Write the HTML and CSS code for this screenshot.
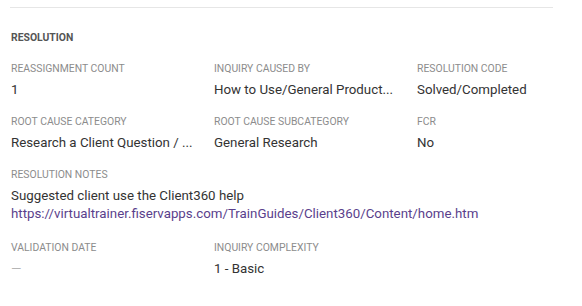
FILE: index.html
```html
<!DOCTYPE html>
<html>
<head>
<meta charset="utf-8">
<link rel="stylesheet" href="styles.css">
</head>
<body>
<section class="panel">
  <h2 class="section-title">RESOLUTION</h2>
  <div class="fields">
    <div class="field">
      <div class="label">REASSIGNMENT COUNT</div>
      <div class="value">1</div>
    </div>
    <div class="field">
      <div class="label">INQUIRY CAUSED BY</div>
      <div class="value">How to Use/General Product...</div>
    </div>
    <div class="field">
      <div class="label">RESOLUTION CODE</div>
      <div class="value">Solved/Completed</div>
    </div>
    <div class="field">
      <div class="label">ROOT CAUSE CATEGORY</div>
      <div class="value">Research a Client Question / ...</div>
    </div>
    <div class="field">
      <div class="label">ROOT CAUSE SUBCATEGORY</div>
      <div class="value">General Research</div>
    </div>
    <div class="field">
      <div class="label">FCR</div>
      <div class="value">No</div>
    </div>
    <div class="field field-wide">
      <div class="label">RESOLUTION NOTES</div>
      <div class="value">Suggested client use the Client360 help<br><a class="link" href="#">https://virtualtrainer.fiservapps.com/TrainGuides/Client360/Content/home.htm</a></div>
    </div>
    <div class="field">
      <div class="label">VALIDATION DATE</div>
      <div class="value value-empty">—</div>
    </div>
    <div class="field">
      <div class="label">INQUIRY COMPLEXITY</div>
      <div class="value">1 - Basic</div>
    </div>
  </div>
</section>
</body>
</html>
```

FILE: styles.css
```css
html, body {
  margin: 0;
  padding: 0;
  background: #ffffff;
}

body {
  font-family: Roboto, "Liberation Sans", Arial, sans-serif;
  color: #333333;
  padding-top: 7px;
}

.panel {
  margin: 0 29px 0 10px;
  border-top: 1px solid #e6e6e6;
  padding: 24px 0 0 1px;
}

.section-title {
  margin: 0 0 19px 0;
  font-size: 10.4px;
  line-height: 12px;
  font-weight: 700;
  color: #555555;
}

.fields {
  display: grid;
  grid-template-columns: 180px 180px 130px;
  column-gap: 23px;
  row-gap: 17px;
}

.field {
  display: flex;
  flex-direction: column;
  gap: 6px;
  min-width: 0;
}

.field-wide {
  grid-column: 1 / -1;
  margin-bottom: 2px;
}

.label {
  font-size: 10.4px;
  line-height: 12px;
  color: #8c8c8c;
  white-space: nowrap;
}

.value {
  font-size: 13.3px;
  line-height: 18px;
  color: #333333;
  white-space: nowrap;
}

.value-empty {
  color: #b5b5b5;
}

.link {
  color: #5a3f8c;
  text-decoration: none;
}
```
